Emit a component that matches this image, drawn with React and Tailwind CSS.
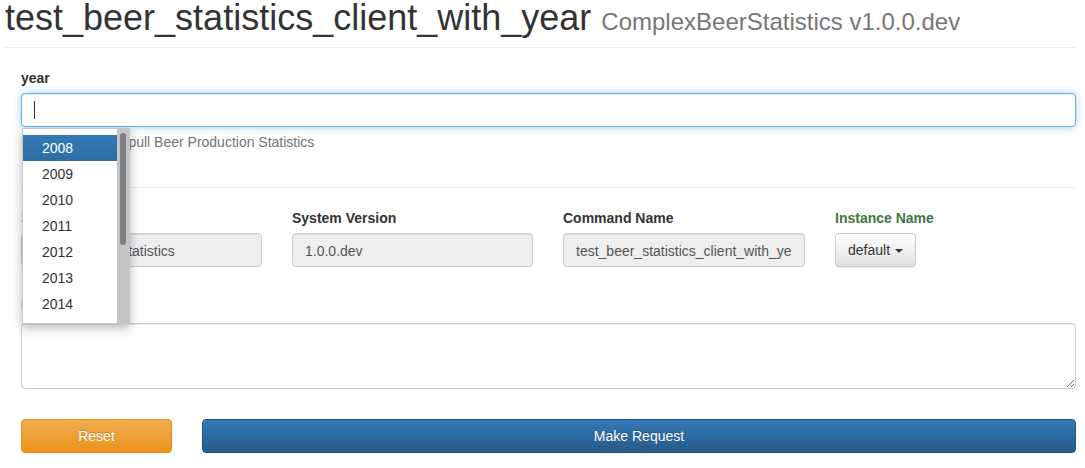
import React from 'react';

const years = ['2008', '2009', '2010', '2011', '2012', '2013', '2014', '2015', '2016'];

function Label({ children, className = '' }) {
  return <label className={`block font-bold leading-5 mb-[5px] ${className}`}>{children}</label>;
}

function ReadOnlyInput({ value }) {
  return (
    <div className="h-[34px] w-full rounded-[4px] border border-[#ccc] bg-[#eee] px-3 pt-px leading-[32px] text-[#555] shadow-[inset_0_1px_1px_rgba(0,0,0,0.075)]">
      <div className="overflow-hidden whitespace-nowrap">{value}</div>
    </div>
  );
}

function YearDropdown() {
  return (
    <div className="absolute left-[1px] top-[35px] z-10 flex h-[196px] w-[108px] overflow-hidden border border-[#c8c8c8] bg-white shadow-[0_4px_10px_rgba(0,0,0,0.28)]">
      <div className="flex-1 pt-[6px]">
        {years.map((y, i) => (
          <div
            key={y}
            className={`h-[26px] pl-[19px] leading-[26px] ${i === 0 ? 'bg-gradient-to-b from-[#337ab7] to-[#2e6da4] text-white' : 'text-[#333]'}`}
          >
            {y}
          </div>
        ))}
      </div>
      <div className="w-[12px] bg-[#c4c4c4] pt-[4px]">
        <div className="mx-auto h-[112px] w-[6px] rounded-full bg-[#7d7f80]"></div>
      </div>
    </div>
  );
}

export default function App() {
  return (
    <div className="bg-white pl-[5px] pr-[9px] font-['Liberation_Sans',Arial,sans-serif] text-[14px] text-[#333]">
      <div className="border-b border-[#eee] pb-[9px]">
        <h1 className="-mt-[2px] whitespace-nowrap text-[36px] leading-[1.1] text-[#333]">
          test_beer_statistics_client_with_year{' '}
          <small className="text-[24px] text-[#777]">ComplexBeerStatistics v1.0.0.dev</small>
        </h1>
      </div>

      <div className="flex flex-col pl-4 pt-5">
        <Label>year</Label>
        <div className="relative">
          <div className="flex h-[34px] w-full items-center rounded-[4px] border border-[#66afe9] bg-white px-3 shadow-[inset_0_1px_1px_rgba(0,0,0,0.075),0_0_8px_rgba(102,175,233,0.6)]">
            <span className="h-[18px] w-px bg-[#333]"></span>
          </div>
          <YearDropdown />
        </div>
        <div className="mt-[5px] leading-5 text-[#737373]">
          Enter the year to pull Beer Production Statistics
        </div>

        <hr className="mb-5 mt-[35px] border-t border-[#eee]" />

        <div className="flex gap-x-[30px]">
          <div className="w-[241px]">
            <Label>System Name</Label>
            <ReadOnlyInput value="ComplexBeerStatistics" />
          </div>
          <div className="w-[241px]">
            <Label>System Version</Label>
            <ReadOnlyInput value="1.0.0.dev" />
          </div>
          <div className="w-[242px]">
            <Label>Command Name</Label>
            <ReadOnlyInput value="test_beer_statistics_client_with_year" />
          </div>
          <div>
            <Label className="text-[#3c763d]">Instance Name</Label>
            <button className="flex h-[34px] items-center gap-[5px] rounded-[4px] border border-[#ccc] bg-gradient-to-b from-white to-[#e0e0e0] px-3 pt-[2px] text-[#333] shadow-[inset_0_1px_0_rgba(255,255,255,0.15),0_1px_1px_rgba(0,0,0,0.075)] [text-shadow:0_1px_0_#fff]">
              default
              <span className="h-0 w-0 border-x-[4px] border-t-[4px] border-x-transparent border-t-[#333]"></span>
            </button>
          </div>
        </div>

        <Label className="mt-[28px] !mb-[8px]">Description</Label>
        <textarea
          readOnly
          className="block h-[66px] w-full rounded-[4px] border border-[#ccc] px-3 py-[6px] shadow-[inset_0_1px_1px_rgba(0,0,0,0.075)] outline-none"
        ></textarea>

        <div className="mt-[30px] flex gap-x-[30px] pb-[15px]">
          <button className="h-[34px] w-[151px] rounded-[4px] border border-[#e38d13] bg-gradient-to-b from-[#f0ad4e] to-[#eb9316] pt-px text-white [text-shadow:0_-1px_0_rgba(0,0,0,0.2)]">
            Reset
          </button>
          <button className="h-[34px] flex-1 rounded-[4px] border border-[#245580] bg-gradient-to-b from-[#337ab7] to-[#265a88] pt-px text-white [text-shadow:0_-1px_0_rgba(0,0,0,0.2)]">
            Make Request
          </button>
        </div>
      </div>
    </div>
  );
}
